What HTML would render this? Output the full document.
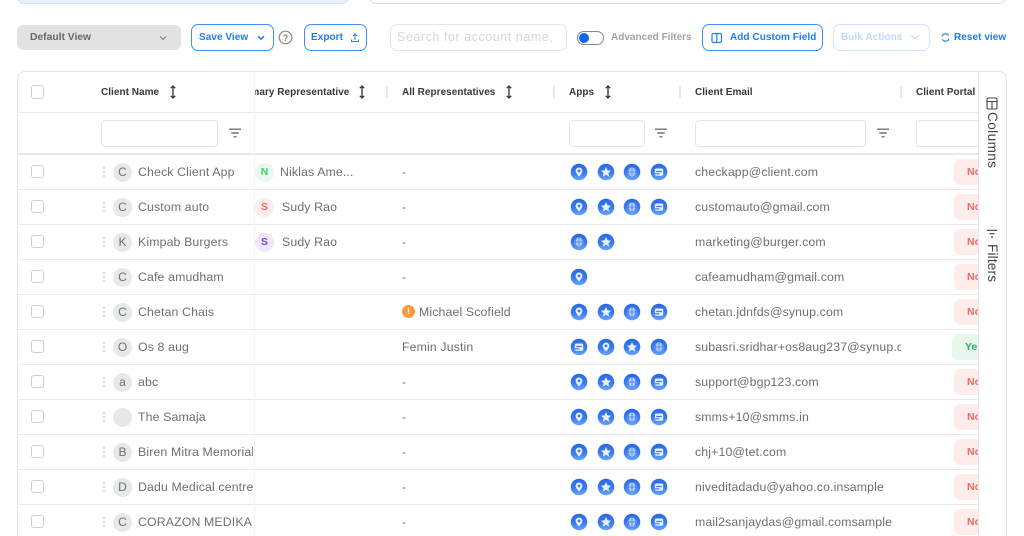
<!DOCTYPE html>
<html lang="en"><head><meta charset="utf-8"><title>Clients</title>
<style>
*{box-sizing:border-box}
html,body{margin:0;padding:0;width:1024px;height:536px;overflow:hidden;background:#fff;font-family:"Liberation Sans",sans-serif}
#w{position:relative;width:1024px;height:536px;overflow:hidden;filter:blur(.35px)}
.a{position:absolute}
.t{position:absolute;white-space:nowrap;line-height:16px;height:16px}
.btn{position:absolute;top:24px;height:27px;border:1.3px solid #3f8ff5;border-radius:7px;background:#fff}
.b{font-size:10px;font-weight:700;color:#1f7cf2;top:30px;letter-spacing:.05px}
.h{font-size:10px;font-weight:700;color:#383838;top:85px;letter-spacing:.03px}
.c{font-size:12.3px;color:#6e6e6e;letter-spacing:.14px}
.line{position:absolute;left:17px;width:961px;height:1.5px;background:#e9e9e9}
.cb{position:absolute;left:31px;width:13px;height:13px;border:1.2px solid #cfcfcf;border-radius:3px;background:#fff}
.sep{position:absolute;top:86px;width:1.5px;height:12px;background:#e3e8f0}
.inp{position:absolute;top:120px;height:27px;border:1px solid #e5e5e5;border-radius:4px;background:#fff}
.av{position:absolute;left:113px;width:19px;height:19px;border-radius:50%;background:#e6e8ec;color:#6f6f6f;font-size:12px;line-height:19px;text-align:center}
.av2{position:absolute;left:255px;width:19px;height:19px;border-radius:50%;font-size:10.5px;font-weight:700;line-height:19px;text-align:center}
.dot{position:absolute;left:103px;width:2px;height:10px}
.bd{position:absolute;left:954px;width:40px;height:26px;border-radius:6px;background:#fdecea;color:#ef6a65;font-size:10.5px;font-weight:700;line-height:26px;padding-left:13px}
.i{position:absolute;width:18px;height:18px}
</style></head><body>
<div id="w">
<svg width="0" height="0" style="position:absolute">
<defs>
<linearGradient id="g" x1="0" y1="0" x2="0" y2="1"><stop offset="0" stop-color="#2a68e4"/><stop offset=".55" stop-color="#3a7bee"/><stop offset="1" stop-color="#69a6ff"/></linearGradient>
<symbol id="dots" viewBox="0 0 2 10"><circle cx="1" cy="1" r=".7" fill="#999"/><circle cx="1" cy="5" r=".7" fill="#999"/><circle cx="1" cy="9" r=".7" fill="#999"/></symbol>
<symbol id="fl" viewBox="0 0 14 10"><path d="M1 1.200h12M3.200 5h7.600M5.500 8.800h3" stroke="#555" stroke-width="1.200" fill="none"/></symbol>
<symbol id="so" viewBox="0 0 8 14"><path d="M4 1v12M1.800 3.200 4 1l2.200 2.200M1.800 10.800 4 13l2.200-2.200" stroke="#333" stroke-width="1.300" fill="none"/></symbol>
<symbol id="pin" viewBox="0 0 18 18"><circle cx="9" cy="9" r="8.300" fill="url(#g)"/><path d="M9 4.500a3.400 3.400 0 0 0-3.400 3.400c0 2.300 3.400 5.600 3.400 5.600s3.400-3.300 3.400-5.600A3.400 3.400 0 0 0 9 4.500z" fill="#e8f0ff"/><circle cx="9" cy="7.900" r="1.400" fill="#3b79ea"/></symbol>
<symbol id="star" viewBox="0 0 18 18"><circle cx="9" cy="9" r="8.300" fill="url(#g)"/><path d="M9 4l1.500 3.300 3.600.4-2.700 2.400.8 3.500L9 11.800l-3.200 1.800.8-3.500-2.700-2.400 3.600-.4z" fill="#e8f0ff"/></symbol>
<symbol id="globe" viewBox="0 0 18 18"><circle cx="9" cy="9" r="8.300" fill="url(#g)"/><circle cx="9" cy="9" r="4.600" fill="#b4cefd"/><path d="M4.400 9h9.200M9 4.400v9.200M6.300 5.400c-1 2.200-1 5 0 7.200M11.700 5.400c1 2.200 1 5 0 7.200" stroke="#3b79ea" stroke-width=".7" fill="none"/></symbol>
<symbol id="store" viewBox="0 0 18 18"><circle cx="9" cy="9" r="8.300" fill="url(#g)"/><rect x="4.800" y="5.500" width="8.400" height="7.200" rx="1.400" fill="#e8f0ff"/><path d="M6.200 8.500h5.600M5 10.800h4.500" stroke="#3b79ea" stroke-width="1.200" fill="none"/></symbol>
</defs></svg>

<!-- top cards -->
<div class="a" style="left:17px;top:-20px;width:332px;height:24px;background:#e7f1fc;border:1px solid #d9dfe8;border-radius:7px"></div>
<div class="a" style="left:369px;top:-20px;width:637px;height:24px;background:#fff;border:1px solid #dedede;border-radius:7px"></div>

<!-- toolbar -->
<div class="a" style="left:17px;top:25px;width:164px;height:25px;background:#e2e2e2;border-radius:6px"></div>
<div class="t" style="left:30px;top:30px;font-size:10.300px;font-weight:700;color:#666">Default View</div>
<svg class="a" style="left:159px;top:35px" width="8" height="6"><path d="M1 1.500 4 4.500 7 1.500" stroke="#777" stroke-width="1" fill="none"/></svg>
<div class="btn" style="left:191px;width:83px"></div>
<div class="t b" style="left:199px">Save View</div>
<svg class="a" style="left:257px;top:35px" width="8" height="6"><path d="M1 1.200 4 4.200 7 1.200" stroke="#1f7cf2" stroke-width="1.500" fill="none"/></svg>
<svg class="a" style="left:278px;top:30px" width="15" height="15"><circle cx="7.500" cy="7.500" r="6.300" stroke="#888" stroke-width="1.200" fill="none"/><text x="7.500" y="11" font-size="9" font-weight="700" text-anchor="middle" fill="#888" font-family="Liberation Sans">?</text></svg>
<div class="btn" style="left:304px;width:63px"></div>
<div class="t b" style="left:311px">Export</div>
<svg class="a" style="left:350px;top:32px" width="10" height="11"><path d="M5 8V2M3 4 5 2l2 2M1.500 7.500v2h7v-2" stroke="#1f7cf2" stroke-width="1" fill="none"/></svg>
<div class="a" style="left:390px;top:24px;width:177px;height:27px;border:1.200px solid #e6e6e6;border-radius:7px"></div>
<div class="t" style="left:397px;top:29px;font-size:12.500px;color:#d6d6d6;letter-spacing:.55px">Search for account name,</div>
<div class="a" style="left:577px;top:31px;width:27px;height:14px;border:1.200px solid #8a8a8a;border-radius:7px;background:#fff"></div>
<div class="a" style="left:579px;top:33px;width:10px;height:10px;border-radius:50%;background:#0f6af0"></div>
<div class="t" style="left:611px;top:30px;font-size:10px;font-weight:700;color:#a3a3a3">Advanced Filters</div>
<div class="btn" style="left:702px;width:121px"></div>
<svg class="a" style="left:711px;top:32px" width="12" height="12"><rect x="1" y="1.500" width="9.500" height="9" rx="1.500" stroke="#1f7cf2" stroke-width="1.200" fill="none"/><path d="M5.800 1.500v9" stroke="#1f7cf2" stroke-width="1.200"/></svg>
<div class="t b" style="left:730px">Add Custom Field</div>
<div class="btn" style="left:833px;width:97px;border-color:#cfe3fc"></div>
<div class="t b" style="left:841px;color:#bcd8fb">Bulk Actions</div>
<svg class="a" style="left:910px;top:34px" width="10" height="7"><path d="M1 1 5 5 9 1" stroke="#bcd8fb" stroke-width="1.100" fill="none"/></svg>
<svg class="a" style="left:941px;top:33px" width="9" height="9"><path d="M1 3.500A3.600 3.600 0 0 1 7.600 2.600M8 5.500A3.600 3.600 0 0 1 1.400 6.400" stroke="#1f7cf2" stroke-width="1.100" fill="none"/></svg>
<div class="t b" style="left:954px">Reset view</div>

<!-- table frame -->
<div class="a" style="left:17px;top:71px;width:990px;height:490px;border:1.200px solid #e6e6e6;border-radius:8px"></div>
<div class="line" style="top:111.500px"></div>
<div class="line" style="top:153px;height:2px"></div>
<div class="line" style="top:188.500px"></div>
<div class="line" style="top:223.500px"></div>
<div class="line" style="top:258.500px"></div>
<div class="line" style="top:293.500px"></div>
<div class="line" style="top:328.500px"></div>
<div class="line" style="top:363.500px"></div>
<div class="line" style="top:398.500px"></div>
<div class="line" style="top:433.500px"></div>
<div class="line" style="top:468.500px"></div>
<div class="line" style="top:503.500px"></div>
<div class="a" style="left:254px;top:72px;width:1px;height:464px;background:#f3f3f3"></div>

<!-- header -->
<div class="cb" style="top:85px;height:14px"></div>
<div class="t h" style="left:101px">Client Name</div>
<svg class="a" style="left:169px;top:85px" width="8" height="14"><use href="#so"/></svg>
<div class="a" style="left:255px;top:80px;width:100px;height:24px;overflow:hidden"><div class="t h" style="left:-18px;top:5px">Primary Representative</div></div>
<svg class="a" style="left:358px;top:85px" width="8" height="14"><use href="#so"/></svg>
<div class="sep" style="left:386px"></div>
<div class="t h" style="left:402px">All Representatives</div>
<svg class="a" style="left:505px;top:85px" width="8" height="14"><use href="#so"/></svg>
<div class="sep" style="left:553px"></div>
<div class="t h" style="left:569px">Apps</div>
<svg class="a" style="left:604px;top:85px" width="8" height="14"><use href="#so"/></svg>
<div class="sep" style="left:679px"></div>
<div class="t h" style="left:695px">Client Email</div>
<div class="sep" style="left:900px"></div>
<div class="t h" style="left:916px">Client Portal</div>

<!-- filters -->
<div class="inp" style="left:101px;width:117px"></div>
<svg class="a" style="left:228px;top:128px" width="14" height="10"><use href="#fl"/></svg>
<div class="inp" style="left:569px;width:76px"></div>
<svg class="a" style="left:654px;top:128px" width="14" height="10"><use href="#fl"/></svg>
<div class="inp" style="left:695px;width:171px"></div>
<svg class="a" style="left:876px;top:128px" width="14" height="10"><use href="#fl"/></svg>
<div class="inp" style="left:916px;width:70px"></div>

<!-- checkboxes, dots -->
<div class="cb" style="top:165px"></div><div class="cb" style="top:200px"></div><div class="cb" style="top:235px"></div><div class="cb" style="top:270px"></div><div class="cb" style="top:305px"></div><div class="cb" style="top:340px"></div><div class="cb" style="top:375px"></div><div class="cb" style="top:410px"></div><div class="cb" style="top:445px"></div><div class="cb" style="top:480px"></div><div class="cb" style="top:515px"></div>
<svg class="dot" style="top:167px"><use href="#dots"/></svg><svg class="dot" style="top:202px"><use href="#dots"/></svg><svg class="dot" style="top:237px"><use href="#dots"/></svg><svg class="dot" style="top:272px"><use href="#dots"/></svg><svg class="dot" style="top:307px"><use href="#dots"/></svg><svg class="dot" style="top:342px"><use href="#dots"/></svg><svg class="dot" style="top:377px"><use href="#dots"/></svg><svg class="dot" style="top:412px"><use href="#dots"/></svg><svg class="dot" style="top:447px"><use href="#dots"/></svg><svg class="dot" style="top:482px"><use href="#dots"/></svg><svg class="dot" style="top:517px"><use href="#dots"/></svg>

<!-- avatars -->
<div class="av" style="top:162.500px">C</div><div class="av" style="top:197.500px">C</div><div class="av" style="top:232.500px">K</div><div class="av" style="top:267.500px">C</div><div class="av" style="top:302.500px">C</div><div class="av" style="top:337.500px">O</div><div class="av" style="top:372.500px">a</div><div class="av" style="top:407.500px"></div><div class="av" style="top:442.500px">B</div><div class="av" style="top:477.500px">D</div><div class="av" style="top:512.500px">C</div>

<!-- names -->
<div class="t c" style="left:138px;top:164px">Check Client App</div>
<div class="t c" style="left:138px;top:199px">Custom auto</div>
<div class="t c" style="left:138px;top:234px">Kimpab Burgers</div>
<div class="t c" style="left:138px;top:269px">Cafe amudham</div>
<div class="t c" style="left:138px;top:304px">Chetan Chais</div>
<div class="t c" style="left:138px;top:339px">Os 8 aug</div>
<div class="t c" style="left:138px;top:374px">abc</div>
<div class="t c" style="left:138px;top:409px">The Samaja</div>
<div class="t c" style="left:138px;top:444px;width:115px;overflow:hidden">Biren Mitra Memorial</div>
<div class="t c" style="left:138px;top:479px;width:115px;overflow:hidden">Dadu Medical centre</div>
<div class="t c" style="left:138px;top:514px;width:115px;overflow:hidden">CORAZON MEDIKARI</div>

<!-- primary rep -->
<div class="av2" style="top:162.500px;background:#e8f8ee;color:#3fcf78">N</div>
<div class="t c" style="left:280px;top:164px">Niklas Ame...</div>
<div class="av2" style="top:197.500px;background:#fdecea;color:#f26b66">S</div>
<div class="t c" style="left:282px;top:199px">Sudy Rao</div>
<div class="av2" style="top:232.500px;background:#efe8fd;color:#7a3ff0">S</div>
<div class="t c" style="left:282px;top:234px">Sudy Rao</div>

<!-- all reps -->
<div class="t c" style="left:402px;top:164px">-</div>
<div class="t c" style="left:402px;top:199px">-</div>
<div class="t c" style="left:402px;top:234px">-</div>
<div class="t c" style="left:402px;top:269px">-</div>
<div class="a" style="left:402px;top:305px;width:13px;height:13px;border-radius:50%;background:#f79a3e;color:#fff;font-size:9px;font-weight:700;line-height:13px;text-align:center">!</div>
<div class="t c" style="left:419px;top:304px">Michael Scofield</div>
<div class="t c" style="left:402px;top:339px">Femin Justin</div>
<div class="t c" style="left:402px;top:374px">-</div>
<div class="t c" style="left:402px;top:409px">-</div>
<div class="t c" style="left:402px;top:444px">-</div>
<div class="t c" style="left:402px;top:479px">-</div>
<div class="t c" style="left:402px;top:514px">-</div>

<!-- apps -->
<svg class="i" style="left:570px;top:163px"><use href="#pin"/></svg><svg class="i" style="left:597px;top:163px"><use href="#star"/></svg><svg class="i" style="left:623px;top:163px"><use href="#globe"/></svg><svg class="i" style="left:650px;top:163px"><use href="#store"/></svg>
<svg class="i" style="left:570px;top:198px"><use href="#pin"/></svg><svg class="i" style="left:597px;top:198px"><use href="#star"/></svg><svg class="i" style="left:623px;top:198px"><use href="#globe"/></svg><svg class="i" style="left:650px;top:198px"><use href="#store"/></svg>
<svg class="i" style="left:570px;top:233px"><use href="#globe"/></svg><svg class="i" style="left:597px;top:233px"><use href="#star"/></svg>
<svg class="i" style="left:570px;top:268px"><use href="#pin"/></svg>
<svg class="i" style="left:570px;top:303px"><use href="#pin"/></svg><svg class="i" style="left:597px;top:303px"><use href="#star"/></svg><svg class="i" style="left:623px;top:303px"><use href="#globe"/></svg><svg class="i" style="left:650px;top:303px"><use href="#store"/></svg>
<svg class="i" style="left:570px;top:338px"><use href="#store"/></svg><svg class="i" style="left:597px;top:338px"><use href="#pin"/></svg><svg class="i" style="left:623px;top:338px"><use href="#star"/></svg><svg class="i" style="left:650px;top:338px"><use href="#globe"/></svg>
<svg class="i" style="left:570px;top:373px"><use href="#pin"/></svg><svg class="i" style="left:597px;top:373px"><use href="#star"/></svg><svg class="i" style="left:623px;top:373px"><use href="#globe"/></svg><svg class="i" style="left:650px;top:373px"><use href="#store"/></svg>
<svg class="i" style="left:570px;top:408px"><use href="#pin"/></svg><svg class="i" style="left:597px;top:408px"><use href="#star"/></svg><svg class="i" style="left:623px;top:408px"><use href="#globe"/></svg><svg class="i" style="left:650px;top:408px"><use href="#store"/></svg>
<svg class="i" style="left:570px;top:443px"><use href="#pin"/></svg><svg class="i" style="left:597px;top:443px"><use href="#star"/></svg><svg class="i" style="left:623px;top:443px"><use href="#globe"/></svg><svg class="i" style="left:650px;top:443px"><use href="#store"/></svg>
<svg class="i" style="left:570px;top:478px"><use href="#pin"/></svg><svg class="i" style="left:597px;top:478px"><use href="#star"/></svg><svg class="i" style="left:623px;top:478px"><use href="#globe"/></svg><svg class="i" style="left:650px;top:478px"><use href="#store"/></svg>
<svg class="i" style="left:570px;top:513px"><use href="#pin"/></svg><svg class="i" style="left:597px;top:513px"><use href="#star"/></svg><svg class="i" style="left:623px;top:513px"><use href="#globe"/></svg><svg class="i" style="left:650px;top:513px"><use href="#store"/></svg>

<!-- emails -->
<div class="t c" style="left:695px;top:164px">checkapp@client.com</div>
<div class="t c" style="left:695px;top:199px">customauto@gmail.com</div>
<div class="t c" style="left:695px;top:234px">marketing@burger.com</div>
<div class="t c" style="left:695px;top:269px">cafeamudham@gmail.com</div>
<div class="t c" style="left:695px;top:304px">chetan.jdnfds@synup.com</div>
<div class="t c" style="left:695px;top:339px;width:206px;overflow:hidden">subasri.sridhar+os8aug237@synup.com</div>
<div class="t c" style="left:695px;top:374px">support@bgp123.com</div>
<div class="t c" style="left:695px;top:409px">smms+10@smms.in</div>
<div class="t c" style="left:695px;top:444px">chj+10@tet.com</div>
<div class="t c" style="left:695px;top:479px">niveditadadu@yahoo.co.insample</div>
<div class="t c" style="left:695px;top:514px">mail2sanjaydas@gmail.comsample</div>

<!-- portal -->
<div class="bd" style="top:159px">No</div>
<div class="bd" style="top:194px">No</div>
<div class="bd" style="top:229px">No</div>
<div class="bd" style="top:264px">No</div>
<div class="bd" style="top:299px">No</div>
<div class="bd" style="top:334px;left:952px;background:#e8f7ee;color:#2fa862">Yes</div>
<div class="bd" style="top:369px">No</div>
<div class="bd" style="top:404px">No</div>
<div class="bd" style="top:439px">No</div>
<div class="bd" style="top:474px">No</div>
<div class="bd" style="top:509px">No</div>

<!-- side bar -->
<div class="a" style="left:978px;top:71px;width:29px;height:470px;background:#fff;border-left:1.200px solid #e6e6e6;border-right:1.200px solid #e6e6e6;border-top:1.200px solid #e6e6e6;border-top-right-radius:8px"></div>
<svg class="a" style="left:986px;top:97px" width="12" height="13"><rect x="1" y="1" width="10" height="11" rx="1.500" stroke="#444" stroke-width="1.100" fill="none"/><path d="M1 4.500h10M6 4.500V12" stroke="#444" stroke-width="1.100" fill="none"/></svg>
<div class="t" style="left:984px;top:112px;font-size:13.500px;color:#444;writing-mode:vertical-rl;height:auto;width:17px;line-height:17px;letter-spacing:.45px">Columns</div>
<svg class="a" style="left:986px;top:229px" width="12" height="10"><path d="M1 1.300h10M3.500 4.700h5M5 8h2" stroke="#444" stroke-width="1.200" fill="none"/></svg>
<div class="t" style="left:984px;top:244px;font-size:13.500px;color:#444;writing-mode:vertical-rl;height:auto;width:17px;line-height:17px;letter-spacing:.2px">Filters</div>
</div>
</body></html>
